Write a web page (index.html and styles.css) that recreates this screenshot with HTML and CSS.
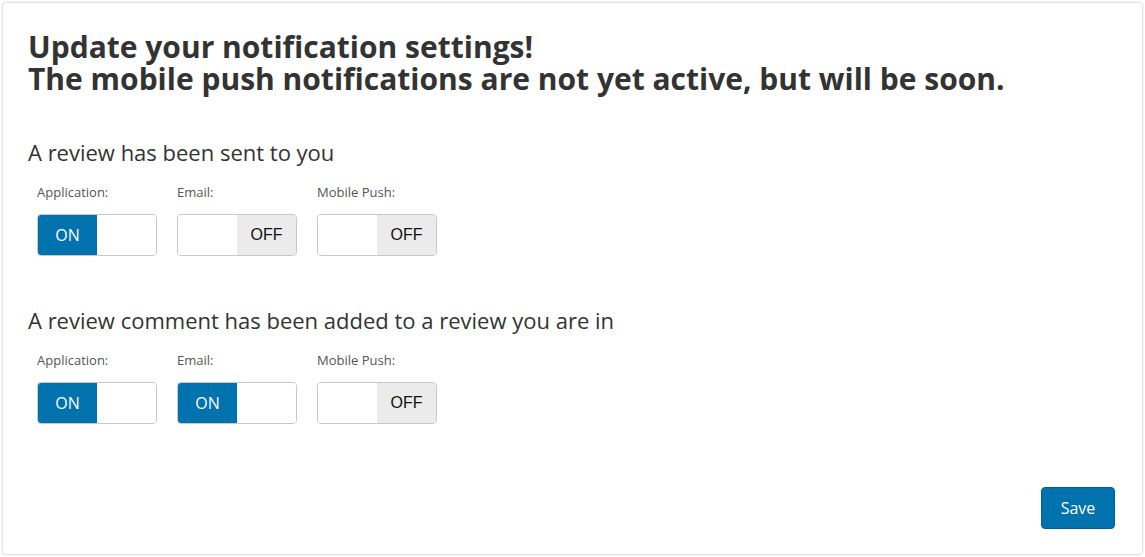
FILE: index.html
```html
<!DOCTYPE html>
<html>
<head>
<meta charset="utf-8">
<link rel="stylesheet" href="styles.css">
</head>
<body>
<div class="card">
  <h1 class="title">Update your notification settings!<br>The mobile push notifications are not yet active, but will be soon.</h1>

  <section class="group">
    <h2 class="group-title">A review has been sent to you</h2>
    <div class="toggles">
      <div class="field">
        <div class="label">Application:</div>
        <div class="toggle on"><span class="half on-half">ON</span><span class="half blank"></span></div>
      </div>
      <div class="field">
        <div class="label">Email:</div>
        <div class="toggle off"><span class="half blank"></span><span class="half off-half">OFF</span></div>
      </div>
      <div class="field">
        <div class="label">Mobile Push:</div>
        <div class="toggle off"><span class="half blank"></span><span class="half off-half">OFF</span></div>
      </div>
    </div>
  </section>

  <section class="group">
    <h2 class="group-title">A review comment has been added to a review you are in</h2>
    <div class="toggles">
      <div class="field">
        <div class="label">Application:</div>
        <div class="toggle on"><span class="half on-half">ON</span><span class="half blank"></span></div>
      </div>
      <div class="field">
        <div class="label">Email:</div>
        <div class="toggle on"><span class="half on-half">ON</span><span class="half blank"></span></div>
      </div>
      <div class="field">
        <div class="label">Mobile Push:</div>
        <div class="toggle off"><span class="half blank"></span><span class="half off-half">OFF</span></div>
      </div>
    </div>
  </section>

  <div class="actions">
    <button class="save">Save</button>
  </div>
</div>
</body>
</html>
```
FILE: styles.css
```css
html, body {
  margin: 0;
  padding: 0;
  background: #fff;
}
body {
  padding: 2px;
  font-family: "Open Sans", "Noto Sans", sans-serif;
  color: #333;
}
.card {
  box-sizing: border-box;
  height: 553px;
  width: 1141px;
  border: 1px solid #e2e2e2;
  border-radius: 4px;
  box-shadow: 0 0 2px rgba(0,0,0,0.12);
  padding: 28px 25px 24px 25px;
  display: flex;
  flex-direction: column;
}
.title {
  margin: 0;
  font-size: 30px;
  line-height: 32px;
  font-weight: 700;
  color: #333;
}
.group {
  margin-top: 42px;
}
.group + .group {
  margin-top: 49px;
}
.group-title {
  margin: 0;
  font-size: 22px;
  line-height: 30px;
  font-weight: 400;
  color: #333;
}
.toggles {
  display: flex;
  gap: 20px;
  padding-left: 9px;
  margin-top: 16px;
}
.label {
  font-size: 13px;
  line-height: 18px;
  color: #555;
  margin-bottom: 13px;
}
.toggle {
  box-sizing: border-box;
  width: 120px;
  height: 42px;
  border: 1px solid #c8c8c8;
  border-radius: 4px;
  overflow: hidden;
  display: flex;
}
.half {
  width: 60px;
  height: 100%;
  display: flex;
  align-items: center;
  justify-content: center;
}
.on-half {
  background: #0072ad;
  color: #fff;
  font-size: 16px;
}
.off-half {
  background: #ebebeb;
  color: #111;
  font-family: "Liberation Sans", Arial, sans-serif;
  font-size: 16px;
}
.blank {
  background: #fff;
}
.actions {
  margin-top: auto;
  display: flex;
  justify-content: flex-end;
}
.save {
  width: 74px;
  height: 42px;
  background: #0072ad;
  color: #fff;
  border: 1px solid #005f91;
  border-radius: 4px;
  font-family: "Open Sans", sans-serif;
  font-size: 16px;
  margin-right: 2px;
  margin-bottom: 1px;
}
```
